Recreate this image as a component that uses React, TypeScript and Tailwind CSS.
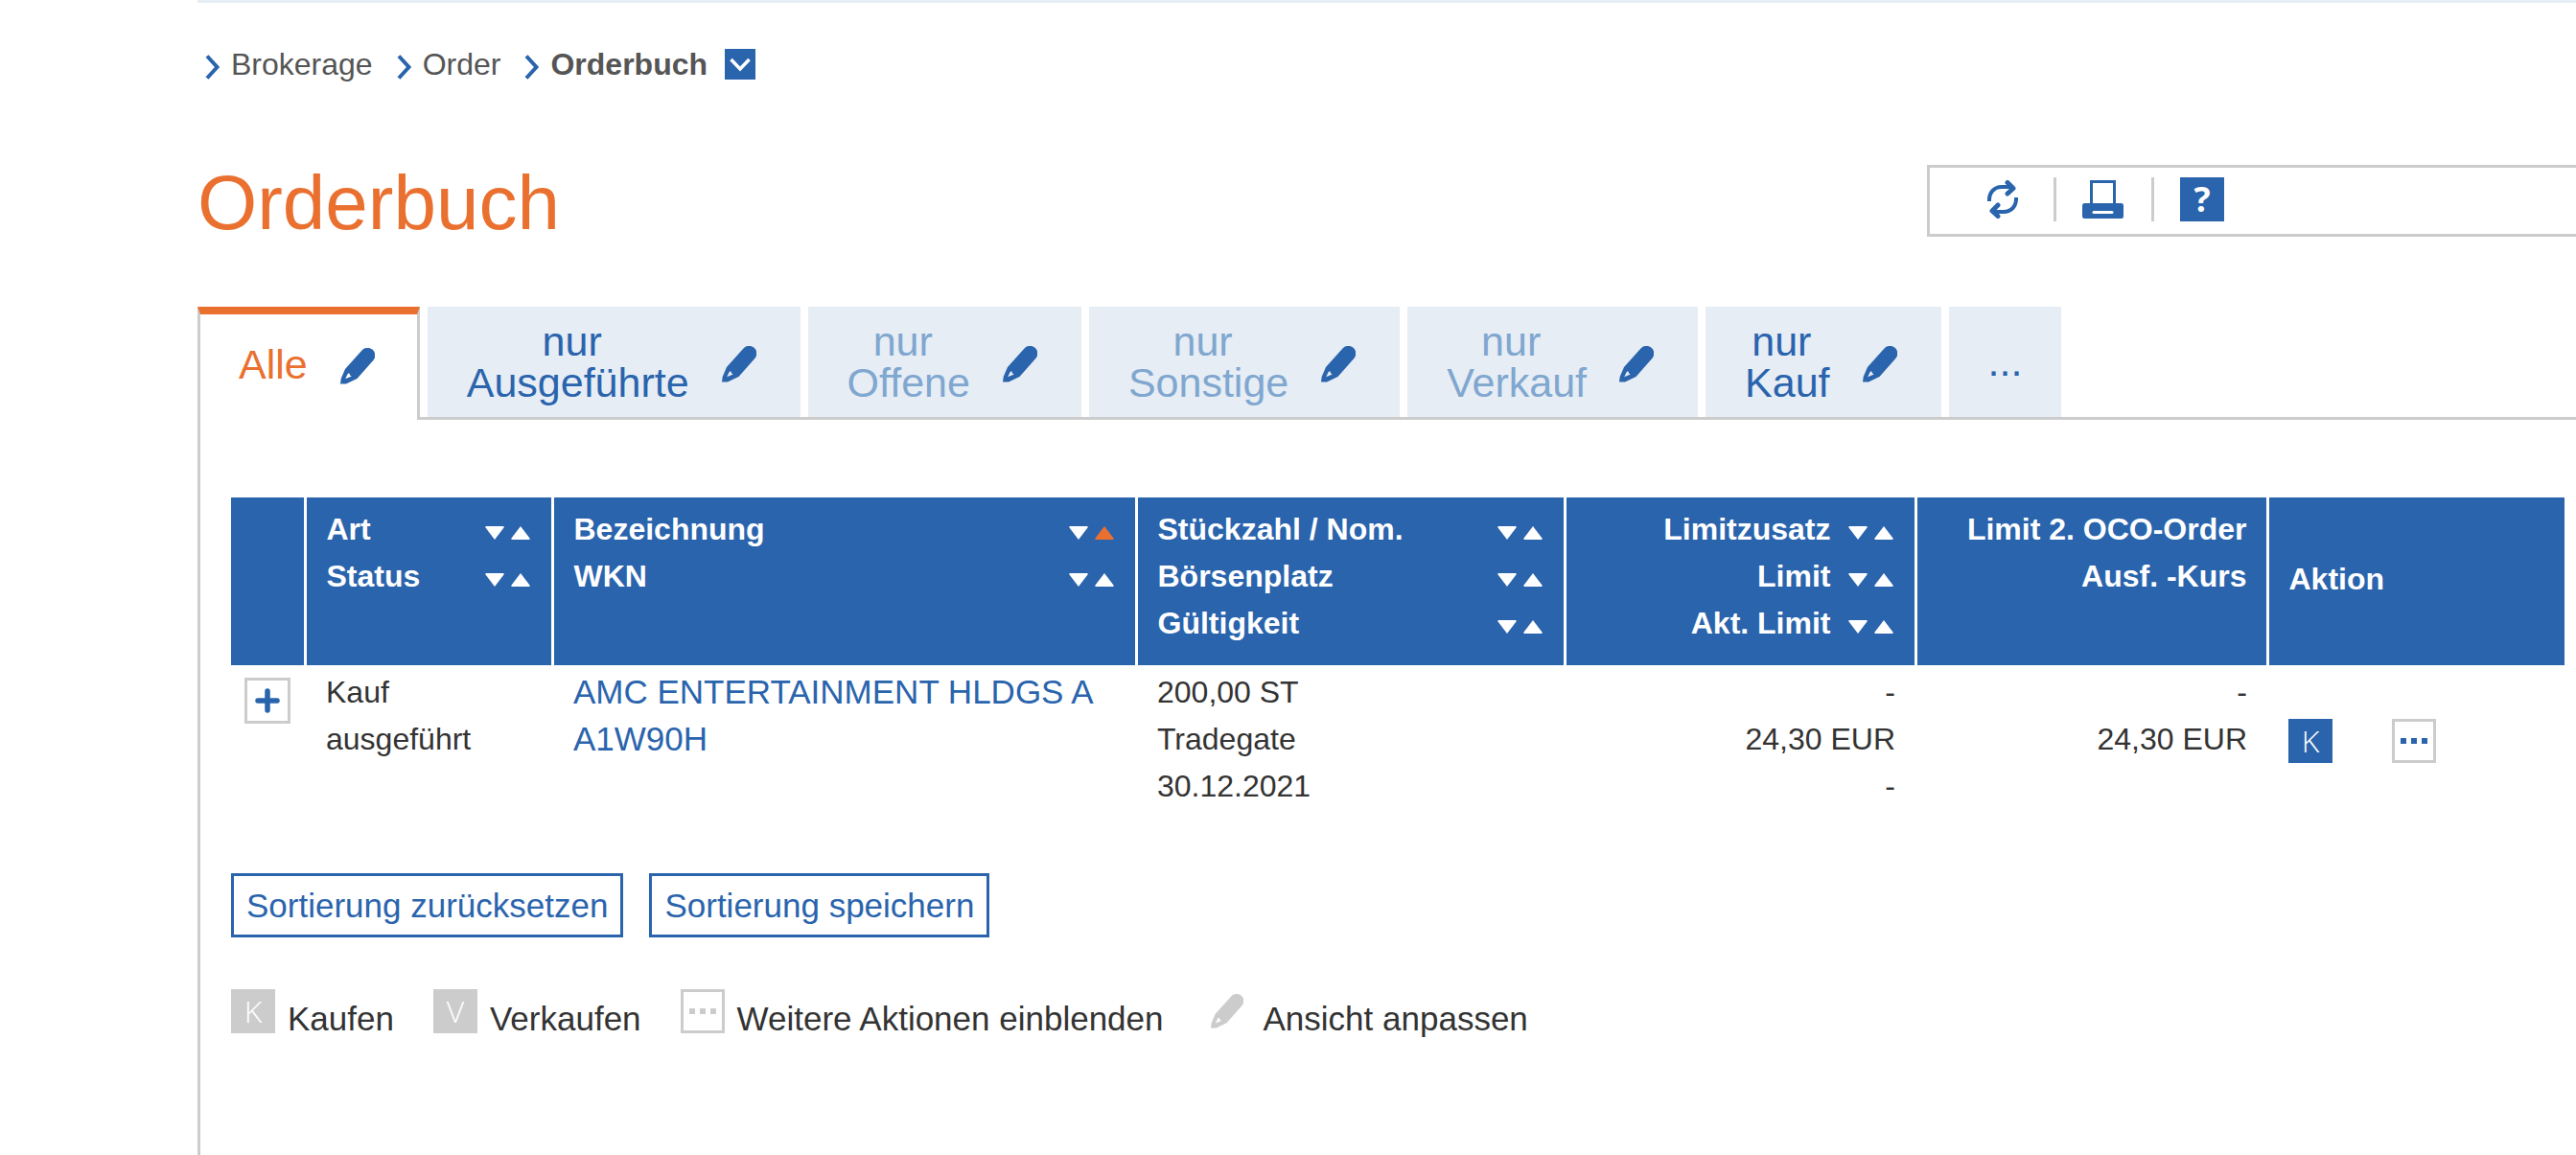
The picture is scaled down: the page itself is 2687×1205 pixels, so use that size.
import { ReactNode } from "react";

const Chevron = () => (
    <svg width="15" height="26" viewBox="0 0 15 26" className="mt-1.5 shrink-0" aria-hidden="true">
        <path d="M2 1.5 12.5 13 2 24.5" fill="none" stroke="#2a64ad" strokeWidth="4" />
    </svg>
);

const Pencil = ({ className = "" }: { className?: string }) => (
    <svg viewBox="0 0 36 38" className={className} fill="currentColor" aria-hidden="true">
        <path
            fillRule="evenodd"
            d="M0 37.5 0.7 32 5 22 22.500 2.500A7.800 7.800 0 0 1 34.300 13L17.500 32 6 37.500ZM8 26.500 5.200 32.300 11.800 29.400 10 28.600 9.700 26.800Z"
        />
    </svg>
);

const Dots = () => (
    <svg width="28" height="6" viewBox="0 0 28 6" fill="currentColor" aria-hidden="true">
        <rect x="0" width="6" height="6" />
        <rect x="11" width="6" height="6" />
        <rect x="22" width="6" height="6" />
    </svg>
);

const SortArrows = ({ label, active = false }: { label: string; active?: boolean }) => (
    <span className="flex shrink-0 gap-[7px] pr-0.5 pt-1.5">
        <button aria-label={`${label} absteigend sortieren`}>
            <svg width="20" height="14" viewBox="0 0 20 14" aria-hidden="true">
                <path d="M0.500 0H19.500V1.500L10 14 0.500 1.500Z" fill="#fff" />
            </svg>
        </button>
        <button aria-label={`${label} aufsteigend sortieren`}>
            <svg width="20" height="14" viewBox="0 0 20 14" aria-hidden="true">
                <path d="M0.500 14H19.500V12.500L10 0 0.500 12.500Z" fill={active ? "#ea7030" : "#fff"} />
            </svg>
        </button>
    </span>
);

const tabs = [
    { name: "Ausgeführte", enabled: true },
    { name: "Offene", enabled: false },
    { name: "Sonstige", enabled: false },
    { name: "Verkauf", enabled: false },
    { name: "Kauf", enabled: true },
];

type Column = {
    labels: string[];
    sortable?: boolean;
    right?: boolean;
    active?: string;
};

const columns: Column[] = [
    { labels: ["Art", "Status"], sortable: true },
    { labels: ["Bezeichnung", "WKN"], sortable: true, active: "Bezeichnung" },
    { labels: ["Stückzahl / Nom.", "Börsenplatz", "Gültigkeit"], sortable: true },
    { labels: ["Limitzusatz", "Limit", "Akt. Limit"], sortable: true, right: true },
    { labels: ["Limit 2. OCO-Order", "Ausf. -Kurs"], right: true },
];

const HeaderCell = ({ column }: { column: Column }) => (
    <th className="border-r-3 border-white pt-[9px] pr-5 pb-[19px] pl-[21px] align-top">
        {column.labels.map((label) => (
            <div
                key={label}
                className={
                    column.right
                        ? "flex items-center justify-end gap-[18px]"
                        : "flex items-center justify-between"
                }
            >
                <span>{label}</span>
                {column.sortable && <SortArrows label={label} active={column.active === label} />}
            </div>
        ))}
    </th>
);

const LegendItem = ({ icon, children }: { icon: ReactNode; children: ReactNode }) => (
    <li className="flex items-start gap-[13px]">
        {icon}
        <span className="pt-[7px]">{children}</span>
    </li>
);

const App = () => {
    return (
        <div className="flex min-h-screen flex-col bg-white pl-[206px] font-['Liberation_Sans',Arial,sans-serif] text-[32px] text-[#333]">
            <div className="h-[3px] bg-[#e6edf5]" />

            <nav className="flex items-center pt-11 pl-2 leading-10 text-[#555]" aria-label="Breadcrumb">
                <ol className="flex gap-[25px]">
                    <li className="flex items-center gap-3">
                        <Chevron />
                        <a href="#brokerage">Brokerage</a>
                    </li>
                    <li className="flex items-center gap-3">
                        <Chevron />
                        <a href="#order">Order</a>
                    </li>
                    <li className="flex items-center gap-3 font-bold">
                        <Chevron />
                        <a href="#orderbuch">Orderbuch</a>
                    </li>
                </ol>
                <button className="ml-[18px] flex size-8 items-center justify-center bg-[#2a64ad]" aria-label="Menü öffnen">
                    <svg width="22" height="15" viewBox="0 0 22 15" aria-hidden="true">
                        <path d="M1.500 2 11 12 20.500 2" fill="none" stroke="#fff" strokeWidth="3.500" />
                    </svg>
                </button>
            </nav>

            <header className="mt-[85px] flex items-start justify-between">
                <h1 className="text-[80px] leading-20 text-[#ea7030]">Orderbuch</h1>
                <div className="flex h-[75px] w-[677px] items-center border-3 border-r-0 border-[#ccc] pb-1 pl-[60px] text-[#2a64ad]">
                    <button aria-label="Aktualisieren">
                        <svg width="32" height="40" viewBox="0 0 32 40" fill="none" stroke="currentColor" aria-hidden="true">
                            <path d="M2 22C1.500 13 7 7 15 7h11" strokeWidth="4" />
                            <path d="M21 2.500 27 8.500 21 14" strokeWidth="5" strokeLinecap="round" strokeLinejoin="round" />
                            <path d="M30 18C30.500 27 25 33 17 33H6" strokeWidth="4" />
                            <path d="M11 26 5 32 11 37.500" strokeWidth="5" strokeLinecap="round" strokeLinejoin="round" />
                        </svg>
                    </button>
                    <span className="ml-[37px] h-[46px] w-[3px] bg-[#ccc]" />
                    <button className="ml-[27px]" aria-label="Drucken">
                        <svg width="43" height="40" viewBox="0 0 43 40" aria-hidden="true">
                            <path d="M9.500 26V1.500H33.500V26" fill="#fff" stroke="currentColor" strokeWidth="3" />
                            <rect y="24" width="43" height="16" rx="2.500" fill="currentColor" />
                            <rect x="10.500" y="32" width="22" height="3" rx="1.500" fill="#fff" />
                        </svg>
                    </button>
                    <span className="ml-[29px] h-[46px] w-[3px] bg-[#ccc]" />
                    <button
                        className="ml-[27px] flex size-[46px] items-center justify-center bg-[#2a64ad] font-['Open_Sans',sans-serif] text-[36px] leading-none font-bold text-white"
                        aria-label="Hilfe"
                    >
                        ?
                    </button>
                </div>
            </header>

            <div className="mt-[68px] flex gap-2 border-b-3 border-[#ccc] text-[43px] leading-[43px]">
                <div className="relative -mb-[3px] flex items-center gap-[34px] border-x-3 border-t-8 border-x-[#ccc] border-t-[#ea7030] bg-white pr-11 pb-1.5 pl-10">
                    <button className="text-[#ea7030]">Alle</button>
                    <button className="mt-1 text-[#2a64ad]" aria-label="Ansicht Alle anpassen">
                        <Pencil className="h-[38px] w-9" />
                    </button>
                </div>
                {tabs.map((tab) => (
                    <div key={tab.name} className="flex h-[115px] items-center gap-[34px] bg-[#e6edf5] pr-[46px] pl-[41px]">
                        <button className={tab.enabled ? "text-[#2a64ad]" : "text-[#80a7cf]"}>
                            nur&nbsp;
                            <br />
                            {tab.name}
                        </button>
                        <button className="mt-1 text-[#2a64ad]" aria-label={`Ansicht ${tab.name} anpassen`}>
                            <Pencil className="h-[38px] w-9" />
                        </button>
                    </div>
                ))}
                <button className="bg-[#e6edf5] px-[41px] text-[#2a64ad]">...</button>
            </div>

            <main className="flex-1 border-l-3 border-[#ccc] pt-[81px] pr-3 pl-8">
                <table className="w-full table-fixed leading-[49px]">
                    <colgroup>
                        <col className="w-[77px]" />
                        <col className="w-[258px]" />
                        <col className="w-[609px]" />
                        <col className="w-[447px]" />
                        <col className="w-[366px]" />
                        <col className="w-[367px]" />
                        <col />
                    </colgroup>
                    <thead className="bg-[#2a64ad] text-left font-bold text-white">
                        <tr>
                            <th className="border-r-3 border-white" />
                            {columns.map((column) => (
                                <HeaderCell key={column.labels[0]} column={column} />
                            ))}
                            <th className="px-[21px] pb-1 align-middle">Aktion</th>
                        </tr>
                    </thead>
                    <tbody>
                        <tr className="align-top">
                            <td className="pt-[13px] pl-3.5">
                                <button
                                    className="flex size-12 items-center justify-center border-3 border-[#ccc]"
                                    aria-label="Details einblenden"
                                >
                                    <svg width="26" height="26" viewBox="0 0 26 26" aria-hidden="true">
                                        <path
                                            d="M13 3V23M3 13H23"
                                            stroke="#2a64ad"
                                            strokeWidth="5.500"
                                            strokeLinecap="round"
                                        />
                                    </svg>
                                </button>
                            </td>
                            <td className="px-[22px] pt-1">
                                Kauf
                                <br />
                                ausgeführt
                            </td>
                            <td className="px-[22px] pt-[3px] text-[35px] text-[#2a64ad]">
                                <a href="#amc" className="block">
                                    AMC ENTERTAINMENT HLDGS A
                                </a>
                                <a href="#wkn" className="block">
                                    A1W90H
                                </a>
                            </td>
                            <td className="px-[22px] pt-1">
                                200,00 ST
                                <br />
                                Tradegate
                                <br />
                                30.12.2021
                            </td>
                            <td className="px-[21px] pt-1 text-right">
                                -
                                <br />
                                24,30 EUR
                                <br />-
                            </td>
                            <td className="px-[21px] pt-1 text-right">
                                -
                                <br />
                                24,30 EUR
                            </td>
                            <td className="px-[22px] pt-[56px]">
                                <div className="flex gap-[62px]">
                                    <button
                                        className="flex size-[46px] items-center justify-center bg-[#2a64ad] font-['Open_Sans',sans-serif] leading-none font-light text-white"
                                        aria-label="Kaufen"
                                    >
                                        K
                                    </button>
                                    <button
                                        className="flex size-[46px] items-center justify-center border-3 border-[#ccc] text-[#2a64ad]"
                                        aria-label="Weitere Aktionen"
                                    >
                                        <Dots />
                                    </button>
                                </div>
                            </td>
                        </tr>
                    </tbody>
                </table>

                <div className="mt-[66px] flex gap-[27px] text-[35px] leading-[61px] text-[#2a64ad]">
                    <button className="border-3 border-[#2a64ad] px-[13px]">Sortierung zurücksetzen</button>
                    <button className="border-3 border-[#2a64ad] px-[13px]">Sortierung speichern</button>
                </div>

                <ul className="mt-[54px] flex gap-[41px] text-[35px] leading-[48px]">
                    <LegendItem
                        icon={
                            <span className="flex size-[46px] items-center justify-center bg-[#ccc] font-['Open_Sans',sans-serif] text-[32px] leading-none font-light text-white">
                                K
                            </span>
                        }
                    >
                        Kaufen
                    </LegendItem>
                    <LegendItem
                        icon={
                            <span className="flex size-[46px] items-center justify-center bg-[#ccc] font-['Open_Sans',sans-serif] text-[32px] leading-none font-light text-white">
                                V
                            </span>
                        }
                    >
                        Verkaufen
                    </LegendItem>
                    <LegendItem
                        icon={
                            <span className="flex size-[46px] items-center justify-center border-3 border-[#ccc] text-[#ccc]">
                                <Dots />
                            </span>
                        }
                    >
                        Weitere Aktionen einblenden
                    </LegendItem>
                    <LegendItem
                        icon={
                            <span className="flex h-[46px] w-[50px] items-center justify-center text-[#ccc]">
                                <Pencil className="h-9 w-[34px]" />
                            </span>
                        }
                    >
                        Ansicht anpassen
                    </LegendItem>
                </ul>
            </main>
        </div>
    );
};

export default App;
